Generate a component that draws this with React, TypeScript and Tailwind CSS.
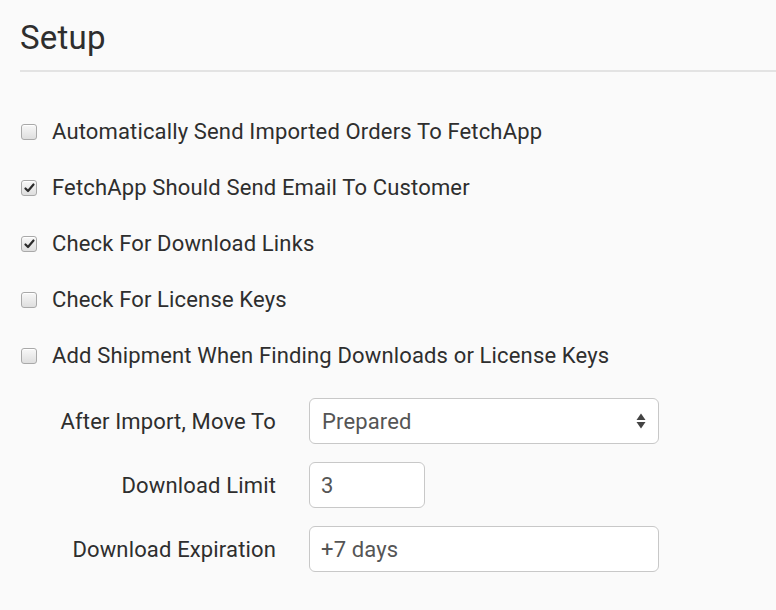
import { useState } from "react";

function Box({ checked, onClick }: { checked: boolean; onClick: () => void }) {
  return (
    <span onClick={onClick}
      className="w-[16px] h-[16px] rounded-[3px] border border-[#a9a9a9] bg-gradient-to-b from-[#f8f8f8] to-[#dedede] flex items-center justify-center shrink-0 shadow-[inset_0_1px_0_#fff]">
      {checked && (
        <svg width="11" height="10" viewBox="0 0 11 10">
          <path d="M1.5 5.5 L4 8 L9.5 1.5" fill="none" stroke="#2b2b2b" strokeWidth="2.2" strokeLinecap="round" strokeLinejoin="round" />
        </svg>
      )}
    </span>
  );
}

export default function App() {
  const [checks, setChecks] = useState([false, true, true, false, false]);
  const labels = [
    "Automatically Send Imported Orders To FetchApp",
    "FetchApp Should Send Email To Customer",
    "Check For Download Links",
    "Check For License Keys",
    "Add Shipment When Finding Downloads or License Keys",
  ];
  const [limit, setLimit] = useState("3");
  const [exp, setExp] = useState("+7 days");

  return (
    <div className="w-[776px] h-[610px] bg-[#fafafa] text-[#2e2e2e] font-['Roboto',sans-serif] overflow-hidden">
      <div className="pl-[20px] pt-[18px]">
        <h2 className="text-[33px] leading-[40px] font-normal tracking-[0.2px]">Setup</h2>
        <div className="mt-[12px] h-[2px] bg-[#e3e3e3]" />

        <div className="mt-[47px] flex flex-col gap-[30px]">
          {labels.map((l, i) => (
            <label key={l} className="flex items-center gap-[15px] h-[26px] pl-[1px] text-[22px] leading-[26px] tracking-[0.15px] cursor-pointer">
              <Box checked={checks[i]} onClick={() => setChecks(checks.map((c, j) => (j === i ? !c : c)))} />
              <span>{l}</span>
            </label>
          ))}
        </div>

        <div className="mt-[29px] grid grid-cols-[256px_350px] gap-x-[33px] gap-y-[18px] items-center text-[22px] tracking-[0.15px]">
          <div className="text-right">After Import, Move To</div>
          <div className="h-[46px] rounded-[6px] border border-[#c8c8c8] bg-white flex items-center justify-between pl-[12px] pr-[12px] text-[#555]">
            <span>Prepared</span>
            <svg width="10" height="18" viewBox="0 0 10 18">
              <path d="M5 1.5 L9.5 8 L0.5 8 Z" fill="#444" />
              <path d="M5 16.5 L9.5 10 L0.5 10 Z" fill="#444" />
            </svg>
          </div>

          <div className="text-right">Download Limit</div>
          <input value={limit} onChange={(e) => setLimit(e.target.value)}
            className="w-[116px] h-[46px] rounded-[6px] border border-[#c8c8c8] bg-white px-[11px] text-[#555] outline-none" />

          <div className="text-right">Download Expiration</div>
          <input value={exp} onChange={(e) => setExp(e.target.value)}
            className="w-[350px] h-[46px] rounded-[6px] border border-[#c8c8c8] bg-white px-[11px] text-[#555] outline-none" />
        </div>
      </div>
    </div>
  );
}
